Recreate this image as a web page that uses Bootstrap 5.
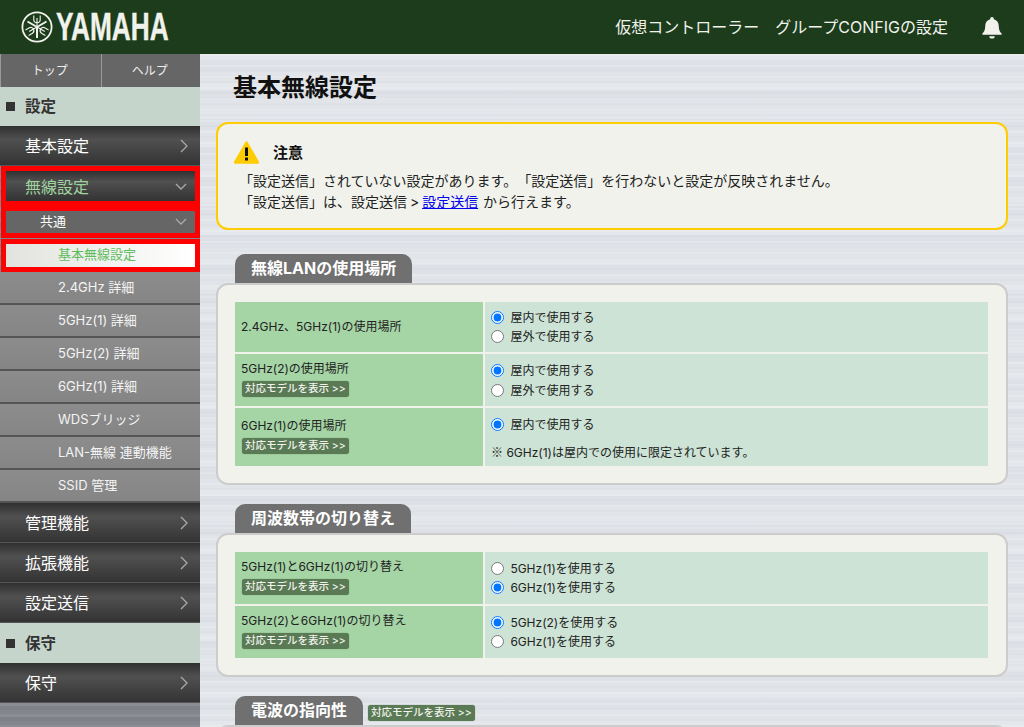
<!DOCTYPE html>
<html lang="ja">
<head>
  <meta charset="UTF-8" />
  <meta name="viewport" content="width=device-width, initial-scale=1.0"/>
  <title>基本無線設定</title>
  <link href="https://cdn.jsdelivr.net/npm/bootstrap@5.3.0/dist/css/bootstrap.min.css" rel="stylesheet"/>
  <style>
    html, body { height: 727px; overflow: hidden; }
    body {
      font-family: "Inter", "Noto Sans CJK JP", sans-serif;
      font-size: 12px;
      color: #222;
      background: #e2e4e9;
      text-spacing-trim: space-all;
    }
    .topbar { height: 54px; background: #1c3c1b; color: #f1f2ec; }
    .brand { width: 200px; padding-left: 21px; }
    .brand-word {
      font-family: "Liberation Sans", sans-serif;
      font-weight: 700;
      font-size: 38px;
      line-height: 1;
      display: inline-block;
      transform: scaleX(.69);
      transform-origin: left center;
      margin-left: 3px;
      width: 112px;
      white-space: nowrap;
      -webkit-text-stroke: .4px #f1f2ec;
    }
    .top-link { font-size: 16px; margin-right: 16px; }
    .bell { margin: 0 21px 0 33px; }

    .metal {
      background-color: #e1e4e9;
      background-image:
        repeating-linear-gradient(180deg, rgba(255,255,255,.16) 0 2px, transparent 2px 5px, rgba(120,125,135,.03) 5px 7px, transparent 7px 11px),
        repeating-linear-gradient(180deg, rgba(255,255,255,.1) 0 7px, rgba(110,115,125,.03) 7px 17px, transparent 17px 29px);
    }
    .side {
      width: 200px;
      height: 673px;
      flex: none;
      background-color: #83868c;
      background-image: repeating-linear-gradient(180deg, rgba(255,255,255,.06) 0 3px, rgba(0,0,0,.04) 3px 7px, transparent 7px 11px);
    }
    .side-tabs { height: 33px; background: #666; border-left: 1px solid #999; }
    .side-tabs div { width: 100px; color: #eee; text-align: center; line-height: 33px; font-size: 12px; padding-right: 2px; }
    .side-tabs div + div { border-left: 1px solid #999; }
    .side-head {
      height: 39px;
      background: #c6d5cc;
      color: #333;
      font-size: 15.500px;
      font-weight: 700;
      padding-left: 6px;
    }
    .side-head.tall { height: 40px; padding-top: 1px; }
    .side-head i { display: block; width: 9px; height: 9px; background: #333; margin-right: 10px; }
    .side-item {
      height: 40px;
      padding: 1px 12px 0 25px;
      color: #fff;
      font-size: 16px;
      background: linear-gradient(180deg, #303030 0, #505050 35%, #454545 60%, #333 100%);
      border-bottom: 1px solid #555;
    }
    .side-item.on { color: #9fd39f; }
    .side-item.red {
      border: 5px solid #f00;
      margin-left: 1px;
      padding: 1px 8px 0 19px;
      height: 40px;
    }
    .side-sub {
      height: 32px;
      margin: 0 0 1px 1px;
      border: 5px solid #f00;
      background: #666;
      color: #fff;
      font-size: 13px;
      padding: 0 8px 0 34px;
    }
    .side-cur {
      height: 33px;
      margin-left: 1px;
      border: 5px solid #f00;
      background: linear-gradient(90deg, #e2e2de, #fff);
      color: #5fbd5f;
      font-size: 13px;
      padding: 0 0 2px 52px;
    }
    .side-leaf {
      height: 33px;
      padding-left: 58px;
      color: #f4f4f4;
      font-size: 13px;
      background: linear-gradient(180deg, #8c8c8c, #858585);
      border-bottom: 2px solid #555;
    }

    .content { padding: 0 16px 0 16px; width: 824px; }
    .page-title { font-size: 24px; font-weight: 700; color: #111; margin: 0; padding: 17px 0 0 17px; height: 68px; line-height: 34px; }
    .notice {
      height: 108px;
      border: 2px solid #fc0;
      border-radius: 12px;
      background: #f1f2ec;
      padding: 15px 0 0 21px;
      font-size: 14px;
      line-height: 21px;
      margin-bottom: 24px;
      width: 792px;
      color: #222;
    }
    .notice-title { font-size: 15px; font-weight: 700; color: #111; height: 27px; margin-bottom: 4px; }
    .notice-title svg { margin: 0 14px 0 -5px; }
    .notice a { color: #00e; margin-right: 2px; }
    .tight { word-spacing: -1px; }
    .group-tab {
      display: inline-block;
      height: 29px;
      line-height: 29px;
      margin-left: 19px;
      padding: 0 16px;
      background: #707070;
      color: #fff;
      font-size: 16px;
      font-weight: 700;
      border-radius: 10px 10px 0 0;
      vertical-align: bottom;
    }
    .group-box {
      width: 792px;
      border: 2px solid #ccc;
      border-radius: 12px;
      background: #f1f2ec;
      padding: 17px 18px 17px 17px;
      margin-bottom: 19px;
    }
    .set-row { display: flex; gap: 2px; margin-bottom: 2px; }
    .set-row:last-child { margin-bottom: 0; }
    .set-label { width: 248px; flex: none; background: #a5d4a5; padding: 6px 6px; color: #222; }
    .set-value { flex: 1; background: #cde3d5; padding: 7px 6px 0; color: #222; }
    .set-row.first .set-value { padding-top: 6px; }
    .set-row.last .set-label { padding-top: 9px; }
    .opt { height: 19px; line-height: 19px; }
    .opt.lower { margin-top: 1px; }
    .opt input { width: 13px; height: 13px; margin: 0 3px 3px 0; vertical-align: middle; }
    .model-btn {
      display: inline-block;
      background: #5a7a55;
      color: #f1f2ec;
      font-size: 10.500px;
      font-weight: 500;
      line-height: 16px;
      padding: 0 3px;
      border-radius: 3px;
      margin: 3px 0 0 1px;
      box-shadow: 0 0 1px #5a7a55;
    }
    .note { margin-top: 9px; }
    .cjk { font-family: "Noto Sans CJK JP", sans-serif; }
  </style>
</head>
<body>
  <div class="topbar d-flex align-items-center">
    <div class="brand d-flex align-items-center">
      <svg width="32" height="32" viewBox="0 0 32 32" fill="none" stroke="#f1f2ec">
        <circle cx="16" cy="16" r="14.6" stroke-width="1.8"/>
        <g stroke-width="1.100">
          <g id="fork"><path d="M16 16V7M12.800 4.500v4.500q0 2.500 3.200 3q3.200-.5 3.200-3V4.500" /><path d="M16 16v11" stroke-width="2"/></g>
          <use href="#fork" transform="rotate(120 16 16)"/>
          <use href="#fork" transform="rotate(240 16 16)"/>
        </g>
      </svg>
      <span class="brand-word">YAMAHA</span>
    </div>
    <div class="ms-auto d-flex align-items-center">
      <span class="top-link">仮想コントローラー</span>
      <span class="top-link m-0">グループCONFIGの設定</span>
      <svg class="bell" width="22" height="25" viewBox="0 0 24 26" fill="#f1f2ec">
        <path d="M12 1.500a2 2 0 0 1 2 2v.6c3.500.9 5.400 3.800 5.400 7.400 0 4.400 1.300 6.100 3.100 8.100v1.400H1.500v-1.400c1.800-2 3.100-3.700 3.100-8.100 0-3.600 1.900-6.500 5.400-7.400v-.6a2 2 0 0 1 2-2z"/>
        <path d="M9 22.500h6a3 2.600 0 0 1-6 0z"/>
      </svg>
    </div>
  </div>

  <div class="d-flex">
    <nav class="side">
      <div class="side-tabs d-flex"><div>トップ</div><div>ヘルプ</div></div>
      <div class="side-head d-flex align-items-center"><i></i>設定</div>
      <div class="side-item d-flex align-items-center justify-content-between">基本設定
        <svg width="8" height="14" viewBox="0 0 8 14" fill="none" stroke="#aaa" stroke-width="1.300"><path d="M1 1l6 6-6 6"/></svg></div>
      <div class="side-item red on d-flex align-items-center justify-content-between">無線設定
        <svg width="12" height="8" viewBox="0 0 12 8" fill="none" stroke="#aaa" stroke-width="1.300"><path d="M1 1l5 5 5-5"/></svg></div>
      <div class="side-sub d-flex align-items-center justify-content-between">共通
        <svg width="12" height="8" viewBox="0 0 12 8" fill="none" stroke="#aaa" stroke-width="1.300"><path d="M1 1l5 5 5-5"/></svg></div>
      <div class="side-cur d-flex align-items-center">基本無線設定</div>
      <div class="side-leaf d-flex align-items-center">2.4GHz 詳細</div>
      <div class="side-leaf d-flex align-items-center">5GHz(1) 詳細</div>
      <div class="side-leaf d-flex align-items-center">5GHz(2) 詳細</div>
      <div class="side-leaf d-flex align-items-center">6GHz(1) 詳細</div>
      <div class="side-leaf d-flex align-items-center">WDSブリッジ</div>
      <div class="side-leaf d-flex align-items-center">LAN-無線 連動機能</div>
      <div class="side-leaf d-flex align-items-center">SSID 管理</div>
      <div class="side-item d-flex align-items-center justify-content-between">管理機能
        <svg width="8" height="14" viewBox="0 0 8 14" fill="none" stroke="#aaa" stroke-width="1.300"><path d="M1 1l6 6-6 6"/></svg></div>
      <div class="side-item d-flex align-items-center justify-content-between">拡張機能
        <svg width="8" height="14" viewBox="0 0 8 14" fill="none" stroke="#aaa" stroke-width="1.300"><path d="M1 1l6 6-6 6"/></svg></div>
      <div class="side-item d-flex align-items-center justify-content-between">設定送信
        <svg width="8" height="14" viewBox="0 0 8 14" fill="none" stroke="#aaa" stroke-width="1.300"><path d="M1 1l6 6-6 6"/></svg></div>
      <div class="side-head tall d-flex align-items-center"><i></i>保守</div>
      <div class="side-item d-flex align-items-center justify-content-between">保守
        <svg width="8" height="14" viewBox="0 0 8 14" fill="none" stroke="#aaa" stroke-width="1.300"><path d="M1 1l6 6-6 6"/></svg></div>
    </nav>

    <main class="content metal">
      <h1 class="page-title">基本無線設定</h1>
      <div class="notice">
        <div class="notice-title d-flex align-items-center">
          <svg width="25" height="23" viewBox="0 0 25 23"><path d="M12.500 1.500L24 21.500H1z" fill="#fc0" stroke="#fc0" stroke-width="2.500" stroke-linejoin="round"/><path d="M11 6.500h3v8.500h-3zM11 16.500h3v3h-3z" fill="#111"/></svg>
          注意
        </div>
        <div>「設定送信」されていない設定があります。「設定送信」を行わないと設定が反映されません。</div>
        <div class="tight">「設定送信」は、設定送信 &gt; <a href="#">設定送信</a> から行えます。</div>
      </div>

      <div class="group-tab">無線LANの使用場所</div>
      <div class="group-box">
        <div class="set-row first" style="height:50px">
          <div class="set-label d-flex align-items-center">2.4GHz、5GHz(1)の使用場所</div>
          <div class="set-value">
            <div class="opt"><input type="radio" name="a" checked> 屋内で使用する</div>
            <div class="opt"><input type="radio" name="a"> 屋外で使用する</div>
          </div>
        </div>
        <div class="set-row" style="height:52px">
          <div class="set-label">5GHz(2)の使用場所<br><span class="model-btn">対応モデルを表示 &gt;&gt;</span></div>
          <div class="set-value">
            <div class="opt"><input type="radio" name="b" checked> 屋内で使用する</div>
            <div class="opt lower"><input type="radio" name="b"> 屋外で使用する</div>
          </div>
        </div>
        <div class="set-row last" style="height:58px">
          <div class="set-label">6GHz(1)の使用場所<br><span class="model-btn">対応モデルを表示 &gt;&gt;</span></div>
          <div class="set-value">
            <div class="opt"><input type="radio" name="c" checked> 屋内で使用する</div>
            <div class="note"><span class="cjk">※</span> 6GHz(1)は屋内での使用に限定されています。</div>
          </div>
        </div>
      </div>

      <div class="group-tab">周波数帯の切り替え</div>
      <div class="group-box">
        <div class="set-row" style="height:52px">
          <div class="set-label">5GHz(1)と6GHz(1)の切り替え<br><span class="model-btn">対応モデルを表示 &gt;&gt;</span></div>
          <div class="set-value">
            <div class="opt"><input type="radio" name="d"> 5GHz(1)を使用する</div>
            <div class="opt"><input type="radio" name="d" checked> 6GHz(1)を使用する</div>
          </div>
        </div>
        <div class="set-row" style="height:52px">
          <div class="set-label">5GHz(2)と6GHz(1)の切り替え<br><span class="model-btn">対応モデルを表示 &gt;&gt;</span></div>
          <div class="set-value">
            <div class="opt"><input type="radio" name="e" checked> 5GHz(2)を使用する</div>
            <div class="opt"><input type="radio" name="e"> 6GHz(1)を使用する</div>
          </div>
        </div>
      </div>

      <div class="d-flex align-items-end gap-1">
        <div class="group-tab">電波の指向性</div>
        <span class="model-btn mb-1">対応モデルを表示 &gt;&gt;</span>
      </div>
      <div class="group-box"></div>
    </main>
  </div>
</body>
</html>
